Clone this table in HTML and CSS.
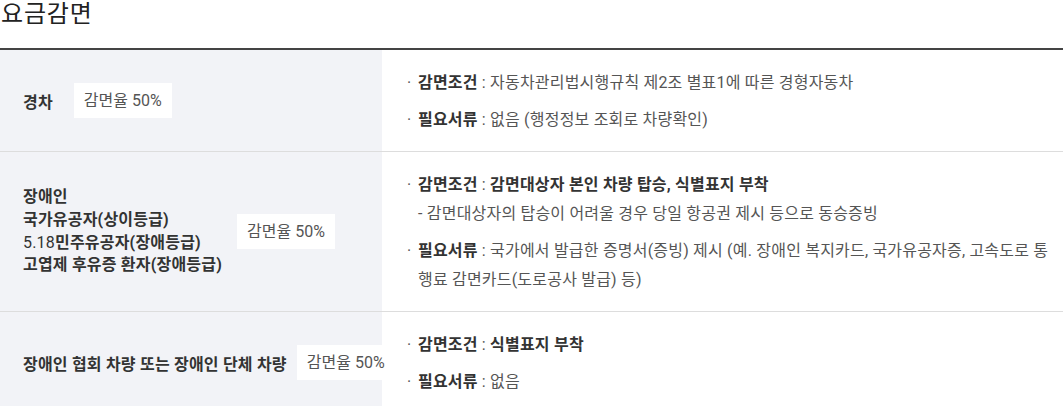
FILE: index.html
```html
<!DOCTYPE html>
<html lang="ko">
<head>
<meta charset="utf-8">
<link rel="stylesheet" href="styles.css">
</head>
<body>
<h2 class="title">요금감면</h2>
<div class="table">
  <div class="row">
    <div class="head">
      <div class="name name-gap-lg"><strong>경차</strong></div>
      <span class="badge">감면율 50%</span>
    </div>
    <div class="body">
      <ul class="items">
        <li><strong>감면조건</strong> : 자동차관리법시행규칙 제2조 별표1에 따른 경형자동차</li>
        <li><strong>필요서류</strong> : 없음 (행정정보 조회로 차량확인)</li>
      </ul>
    </div>
  </div>
  <div class="row">
    <div class="head">
      <div class="name name-multi name-gap-md">
        <strong>장애인</strong>
        <strong>국가유공자(상이등급)</strong>
        <strong><span class="num">5.18</span>민주유공자(장애등급)</strong>
        <strong>고엽제 후유증 환자(장애등급)</strong>
      </div>
      <span class="badge">감면율 50%</span>
    </div>
    <div class="body">
      <ul class="items">
        <li><strong>감면조건</strong> : <strong>감면대상자 본인 차량 탑승, 식별표지 부착</strong><br>- 감면대상자의 탑승이 어려울 경우 당일 항공권 제시 등으로 동승증빙</li>
        <li><strong>필요서류</strong> : 국가에서 발급한 증명서(증빙) 제시 (예. 장애인 복지카드, 국가유공자증, 고속도로 통행료 감면카드(도로공사 발급) 등)</li>
      </ul>
    </div>
  </div>
  <div class="row">
    <div class="head">
      <div class="name"><strong>장애인 협회 차량 또는 장애인 단체 차량</strong></div>
      <span class="badge">감면율 50%</span>
    </div>
    <div class="body">
      <ul class="items">
        <li><strong>감면조건</strong> : <strong>식별표지 부착</strong></li>
        <li><strong>필요서류</strong> : 없음</li>
      </ul>
    </div>
  </div>
</div>
</body>
</html>
```
FILE: styles.css
```css
* { box-sizing: border-box; }
html, body { margin: 0; padding: 0; background: #fff; }
body {
  font-family: Roboto, "Noto Sans CJK KR", sans-serif;
  color: #555;
  font-size: 16px;
  letter-spacing: 0.2px;
  overflow: hidden;
}
.title {
  margin: 0;
  height: 48px;
  padding: 0 0 0 1px;
  font-size: 24px;
  font-weight: 400;
  letter-spacing: 0.8px;
  line-height: 28px;
  color: #222;
}
.table {
  border-top: 2px solid #444;
}
.row {
  display: flex;
  border-bottom: 1px solid #ddd;
}
.head {
  flex: 0 0 382px;
  min-width: 0;
  background: #f2f3f7;
  display: flex;
  align-items: center;
  gap: 10px;
  padding-left: 23px;
  white-space: nowrap;
}
.name strong { color: #333; font-weight: 700; }
.name-multi { display: flex; flex-direction: column; line-height: 22.6px; }
.name-gap-lg { margin-right: 11px; }
.name-gap-md { margin-right: 5px; }
.num { font-weight: 400; }
.badge {
  flex: none;
  background: #fff;
  height: 35px;
  line-height: 35px;
  padding: 0 10px;
  letter-spacing: 0;
  color: #555;
}
.body {
  flex: 1;
  min-width: 0;
  padding: 18px 8px 17px 36px;
}
.items {
  list-style: none;
  margin: 0;
  padding: 0;
  line-height: 29px;
}
.items li + li { margin-top: 8px; }
.items li::before {
  content: "·";
  display: inline-block;
  width: 11px;
  margin-left: -11px;
  color: #555;
}
.items strong { color: #333; font-weight: 700; }
```
